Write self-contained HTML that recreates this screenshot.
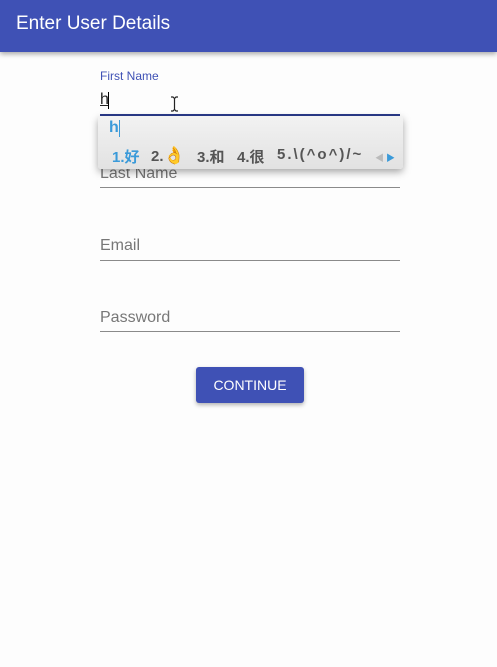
<!DOCTYPE html>
<html><head><style>
body{margin:0;width:497px;height:667px;background:#fdfdfd;font-family:"Liberation Sans","Noto Sans CJK SC",sans-serif;position:relative;overflow:hidden}
.hdr{position:absolute;left:0;top:0;width:497px;height:52px;background:#3f51b5;box-shadow:0 2px 5px rgba(0,0,0,.35);color:#fff;font-size:19px}
.hdr span{position:absolute;left:16px;top:13px}
.abs{position:absolute}
.line{position:absolute;left:100px;width:300px;height:1px;background:#8a8a8a}
.ph{position:absolute;left:100px;font-size:16px;color:#777}
.c{position:absolute;top:146px;font-size:15px;font-weight:bold;color:#555;white-space:nowrap}
</style></head><body>
<div class="hdr"><span>Enter User Details</span></div>
<div class="abs" style="left:100px;top:69px;font-size:12px;color:#3f51b5">First Name</div>
<div class="abs" style="left:100px;top:91px;font-size:16px;color:#222;text-decoration:underline">h</div>
<div class="abs" style="left:108px;top:92px;width:1px;height:17px;background:#000"></div>
<svg class="abs" style="left:170px;top:96px" width="9" height="16" viewBox="0 0 9 16"><path d="M1 1h2l1.5 1.5L6 1h2M4.5 2.5v11M1 15h2l1.5-1.5L6 15h2" stroke="#222" fill="none" stroke-width="1.2"/></svg>
<div class="abs" style="left:100px;top:114px;width:300px;height:2px;background:#2a3a8a"></div>
<div class="ph" style="top:165px">Last Name</div>
<div class="line" style="top:187px"></div>
<div class="abs" style="left:98px;top:116px;width:305px;height:53px;background:linear-gradient(#f2f2f2,#e2e2e2);box-shadow:0 3px 8px rgba(0,0,0,.35);border-radius:3px"></div>
<div class="abs" style="left:109px;top:119px;font-size:16px;font-weight:bold;color:#3a9ad9">h</div>
<div class="abs" style="left:119px;top:120px;width:1px;height:17px;background:#3a9ad9"></div>
<div class="c" style="left:112px;color:#3a9ad9">1.好</div>
<div class="c" style="left:151px">2.<span style="color:#e8a820;font-size:17px">👌</span></div>
<div class="c" style="left:197px">3.和</div>
<div class="c" style="left:237px">4.很</div>
<div class="c" style="left:277px;letter-spacing:2px">5.\(^o^)/~</div>
<div class="abs" style="left:375px;top:151px;font-size:9px;color:#bbb">◀</div>
<div class="abs" style="left:386px;top:151px;font-size:9px;color:#3a9ad9">▶</div>
<div class="ph" style="top:237px">Email</div>
<div class="line" style="top:260px"></div>
<div class="ph" style="top:309px">Password</div>
<div class="line" style="top:331px"></div>
<div class="abs" style="left:196px;top:367px;width:108px;height:36px;background:#3f51b5;border-radius:3px;box-shadow:0 2px 4px rgba(0,0,0,.3);color:#fff;font-size:14px;text-align:center;line-height:36px">CONTINUE</div>
</body></html>
